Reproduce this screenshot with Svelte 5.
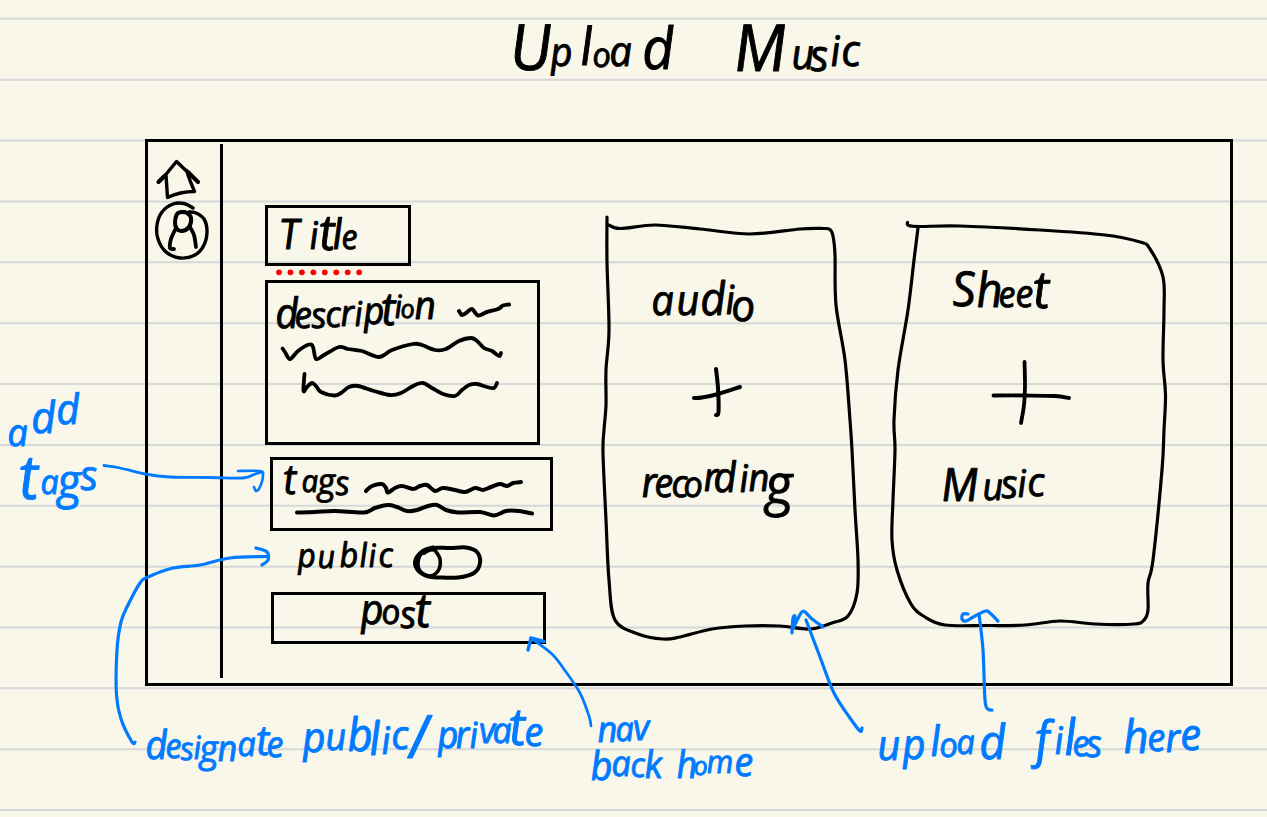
<script>
  // A word is a list of [letter, x, baseline, size], all in page units.
  const words = {
    upload: [['U',511,70,64],['p',551,66,40],['l',581,65,52],['o',593,67,34],['a',610,66,42],['d',643,69,58]],
    music: [['M',735,71,65],['u',792,69,42],['s',811,71,44],['i',831,66,42],['c',842,66,44]],
    title: [['T',280,249,42],['i',310,249,38],['t',320,250,50],['l',333,249,42],['e',342,249,34]],
    description: [['d',276,328,42],['e',295,328,37],['s',312,328,36],['c',326,327,36],['r',341,326,37],['i',355,326,34],['p',364,324,38],['t',382,325,46],['i',395,318,32],['o',401,318,26],['n',415,319,39]],
    tags: [['t',284,494,42],['a',302,492,31],['g',318,494,36],['s',336,495,34]],
    public: [['p',298,567,33],['u',318,568,32],['b',340,567,34],['l',360,567,33],['i',369,567,32],['c',379,567,34]],
    post: [['p',361,624,42],['o',382,624,35],['s',401,628,38],['t',416,627,48]],
    audio: [['a',652,315,42],['u',677,315,42],['d',701,315,46],['i',726,314,40],['o',732,321,44]],
    recording: [['r',642,497,42],['e',655,497,40],['c',672,497,38],['o',684,497,36],['r',704,491,40],['d',714,492,42],['i',740,492,38],['n',749,491,38],['g',766,504,56]],
    sheet: [['S',953,306,48],['h',977,307,48],['e',999,307,36],['e',1016,307,38],['t',1034,308,52]],
    sheetMusic: [['M',942,501,46],['u',983,500,38],['s',1002,498,40],['i',1018,497,38],['c',1028,496,40]],
    add: [['a',8,446,38],['d',32,433,44],['d',57,424,42]],
    addTags: [['t',20,499,62],['a',41,494,34],['g',58,498,48],['s',81,490,42]],
    designate: [['d',146,759,40],['e',166,758,34],['s',181,760,32],['i',194,759,32],['g',200,762,38],['n',218,761,36],['a',238,756,34],['t',257,755,42],['e',267,757,36]],
    publicNote: [['p',303,752,42],['u',326,750,38],['b',348,751,46],['l',370,755,46],['i',382,754,38],['c',392,749,40],['/',410,758,60]],
    private: [['p',438,748,38],['r',456,748,38],['i',470,748,36],['v',480,743,36],['a',493,743,36],['t',510,745,52],['e',525,746,40]],
    nav: [['n',598,742,36],['a',616,741,34],['v',634,740,36]],
    back: [['b',591,780,40],['a',612,776,36],['c',631,777,34],['k',645,778,38]],
    home: [['h',677,778,38],['o',694,775,26],['m',707,773,32],['e',735,776,40]],
    uploadNote: [['u',878,760,42],['p',903,759,42],['l',931,756,42],['o',940,757,34],['a',957,754,34],['d',980,759,48]],
    files: [['f',1036,757,50],['i',1055,754,38],['l',1065,755,50],['e',1073,756,36],['s',1087,757,38]],
    here: [['h',1124,753,46],['e',1148,751,38],['r',1166,752,40],['e',1181,750,44]]
  };

  const SX = 0.97;
  const SK = 0.07;
  const lx = (word, l) => (l[1] - word[0][1] - SK * (l[2] - word[0][2])) / SX;

  // Smooth pen stroke through a flat list of points.
  function pen(...n) {
    const p = [];
    for (let i = 0; i < n.length; i += 2) p.push([n[i], n[i + 1]]);
    let d = `M${p[0]}`;
    for (let i = 0; i < p.length - 1; i++) {
      const a = p[i - 1] ?? p[i], b = p[i], c = p[i + 1], e = p[i + 2] ?? c;
      d += `C${b[0] + (c[0] - a[0]) / 6},${b[1] + (c[1] - a[1]) / 6} ${c[0] - (e[0] - b[0]) / 6},${c[1] - (e[1] - b[1]) / 6} ${c}`;
    }
    return d;
  }

  const rules = Array.from({ length: 14 }, (_, i) => 18.8 + i * 60.87);
  const dots = Array.from({ length: 8 }, (_, i) => 279 + i * 11.45);
</script>

{#snippet ink(word)}
  <text transform="matrix({SX} 0 {SK} 1 {word[0][1]} {word[0][2]})">{#each word as l}<tspan x={lx(word, l)} y={l[2] - word[0][2]} font-size={l[3]}>{l[0]}</tspan>{/each}</text>
{/snippet}

<div class="page">
  <svg class="rules" viewBox="0 0 1267 817" aria-hidden="true">
    {#each rules as y}<line x1="0" x2="1267" y1={y} y2={y} />{/each}
  </svg>

  <header>
    <svg viewBox="500 0 380 100" width="380" height="100">
      {@render ink(words.upload)}
      {@render ink(words.music)}
    </svg>
  </header>

  <main>
    <nav>
      <svg viewBox="148 150 72 55" width="72" height="55">
        <path stroke-width="3.4" d="M158.500 182L165 175.500L176.500 161.500L187 171.500L198 182M166 175L167.500 197.500Q180 191.500 194.500 191.500Q189.500 180 186.500 170.500" />
        <path stroke-width="4" d="M158.500 182L165 175.500M188 172L198 182" />
      </svg>
      <svg viewBox="148 205 72 60" width="72" height="60">
        <path stroke-width="3.4" d={pen(193,208,184,203.500,173,204,162,212,157,225,158,239,166,252,180,258,195,255,204,245,207,231,204,219,196,213,189,212)} />
        <path stroke-width="4" d={pen(185,212,178,213,175,222,177,229,182,231,189,227,191,218,187,213,181,212)} />
        <path stroke-width="3.8" d={pen(175,230,171,239,170,248,174,249)} />
        <path stroke-width="3.8" d={pen(190,227,194,235,196,247)} />
      </svg>
    </nav>

    <form>
      <div class="box title">
        <svg viewBox="268 208 140 55" width="140" height="55">{@render ink(words.title)}</svg>
      </div>
      <svg class="dots" viewBox="265 266 146 14" width="146" height="14">
        {#each dots as x}<circle cx={x} cy="272.300" r="2.900" />{/each}
      </svg>
      <div class="box description">
        <svg viewBox="268 283 269 159" width="269" height="159">
          {@render ink(words.description)}
          <path stroke-width="4" d={pen(459,311,462,315,466,313,472,309,478,315.500,487,312,498,309,503,305.500,509,304.500)} />
          <path stroke-width="3.800" d={pen(282.500,348.500,285,352,290,359,298,351,309,344.500,313,347,316,359,324,355,339,347,348,349,362,351,379,357,392,350,413,344,422,345,435,350,446,349,459,341,471,338,477,341,484,348,492,351,499,356,501,353)} />
          <path stroke-width="3.800" d={pen(304.500,374,303.500,391,307,387,312,383,316,386,321,392,334,395.500,341,393,349,387,358,386,374,391,390,395,401,393,413,386,423,383,432,388,443,394,455,396,462,390,469,385,477,384,487,387,494,388,497,383)} />
        </svg>
      </div>
      <div class="box tags">
        <svg viewBox="273 460 277 68" width="277" height="68">
          {@render ink(words.tags)}
          <path stroke-width="4" d={pen(366,491,372,486,382,484,386,488,388,492.500,395,488,402,486,413,489,420,486,427,485,435,491,443,488,455,490,465,492,475,488,483,490,491,487,500,484,507,486,513,483,521,482)} />
          <path stroke-width="4" d={pen(297,512.500,315,512,335,511,364,512.500,375,508,388,505,397,507,407,511,417,510,428,506,437,505,446,510,458,512.500,480,512,494,515.500,506,511,519,511,532,513.500)} />
        </svg>
      </div>
      <label class="toggle">
        <svg viewBox="273 531 277 61" width="277" height="61">
          {@render ink(words.public)}
          <path stroke-width="4" d={pen(433,547.500,423,551,415.500,560,417,569,427,576,440,577.500,458,577.500,474,573,480,563,477,552,466,547.500,450,548,433,548,424,553)} />
          <path stroke-width="3.600" d={pen(434,549,440,559,438,571,429,576,420,571,418,563,421,554,430,550,435,550)} />
        </svg>
      </label>
      <div class="box post">
        <svg viewBox="274 595 269 46" width="269" height="46">{@render ink(words.post)}</svg>
      </div>
    </form>

    <section>
      <svg viewBox="595 210 275 440" width="275" height="440">
        <path d={pen(607,217,607,262,609,330,606,370,606,405,604,430,603,453,606,520,609,580,615,620,638,634,663,639,680,637,712,629,745,626,780,626,810,629,832,623,848,616,857,593,858,560,855,510,852,450,850,420,845,360,836,305,835,255,833,236,830,229.500,823,228.500,800,229,750,234,700,229,655,225,620,228.500,607,224)} />
        {@render ink(words.audio)}
        <path stroke-width="4" d={pen(694,398,702,397.500,718,394,740,387)} />
        <path stroke-width="4" d={pen(716,369,718,388,718.500,412,716,415)} />
        {@render ink(words.recording)}
      </svg>
      <svg viewBox="885 210 290 440" width="290" height="440">
        <path d={pen(907.500,222.500,908.500,225.500,920,226.500,960,226,1040,230,1105,235,1140,242,1150,249,1163,277,1164,310,1163,360,1165.500,395,1164,430,1162,470,1153,560,1148,583,1148,610,1144,620,1134,624,1095,624,1060,621,1025,625,985,625.500,945,625,925,617,911,604,897,570,892,540,893,500,895,450,894,420,898,370,908,310,914,260,918,228)} />
        {@render ink(words.sheet)}
        <path stroke-width="3.800" d={pen(993.500,395.500,1025,395.500,1055,396,1069,398)} />
        <path stroke-width="3.800" d={pen(1024.500,362,1025,385,1024,405,1021,423)} />
        {@render ink(words.sheetMusic)}
      </svg>
    </section>
  </main>

  <svg class="notes" viewBox="0 0 1267 817">
    {@render ink(words.add)}
    {@render ink(words.addTags)}
    <path stroke-width="2.800" d={pen(104,465.500,120,468,145,474,170,477,210,477.500,243,478,255,474,262,472)} />
    <path stroke-width="2.600" d={pen(238,471,260,471,263,475,260,487,256,491,254,487)} />

    {@render ink(words.designate)}
    {@render ink(words.publicNote)}
    {@render ink(words.private)}
    <path d={pen(135,742,132,742,121,719,116.500,695,117,650,121,622,128,605,140,583,148,577,173,568,200,565,230,558,268,556.500)} />
    <path d={pen(256,548,267,552,268,560,262,565)} />

    {@render ink(words.nav)}
    {@render ink(words.back)}
    {@render ink(words.home)}
    <path stroke-width="2.700" d={pen(591,726,589,716,580,693,566,672,552,654,531,638)} />
    <path stroke-width="3.400" d="M528 650L531 638L544 641.500" />

    {@render ink(words.uploadNote)}
    {@render ink(words.files)}
    {@render ink(words.here)}
    <path d={pen(862,728,860,731,850,718,834,693,820,657,806,620)} />
    <path d={pen(792,633,793,618,795,617,792,630,801,613,805,612,812,619,823,627)} />
    <path d={pen(992,710,988,709,985,700,983,650,979,614)} />
    <path d={pen(968,614,963,614,962,619,966,621,975,616,986,611,991,614,998,621)} />
  </svg>
</div>

<style>
  :global(body) { margin: 0; overflow: hidden; }
  .page {
    position: relative;
    width: 1267px;
    height: 817px;
    overflow: hidden;
    background: #f9f7e9;
    box-sizing: border-box;
    isolation: isolate;
  }
  svg {
    display: block;
    overflow: visible;
    flex: none;
    fill: none;
    stroke: #000;
    stroke-width: 3.2;
    stroke-linecap: round;
    stroke-linejoin: round;
  }
  text {
    font-family: "Open Sans", "Noto Sans", sans-serif;
    font-style: italic;
    font-weight: 400;
    fill: #000;
    stroke: #000;
    stroke-width: 0.9;
    white-space: pre;
  }
  .rules { position: absolute; inset: 0; width: 1267px; height: 817px; z-index: -1; }
  .rules line { stroke: #d6d8d9; stroke-width: 2; stroke-linecap: butt; }
  header { height: 139px; padding-left: 500px; }
  main {
    display: flex;
    width: 1088px;
    height: 547px;
    margin-left: 145px;
    border: 3px solid #000;
    box-sizing: border-box;
  }
  nav {
    width: 75px;
    margin: 2px 0 5px;
    padding-top: 6px;
    border-right: 3px solid #000;
    box-sizing: border-box;
    flex: none;
  }
  form {
    width: 372px;
    padding: 63px 0 0 42px;
    box-sizing: border-box;
    flex: none;
  }
  .box { border: 3px solid #000; box-sizing: border-box; }
  .title { width: 146px; height: 61px; }
  .dots circle { fill: #ff0000; stroke: none; }
  .description { width: 275px; height: 165px; }
  .tags { width: 283px; height: 74px; margin: 12px 0 0 5px; }
  .toggle { display: block; height: 61px; margin-left: 8px; }
  .post { width: 275px; height: 52px; margin-left: 6px; }
  section { display: flex; gap: 15px; padding-top: 68px; }
  .notes { position: absolute; inset: 0; width: 1267px; height: 817px; }
  .notes, .notes text { stroke: #007aff; }
  .notes text { fill: #007aff; }
</style>
